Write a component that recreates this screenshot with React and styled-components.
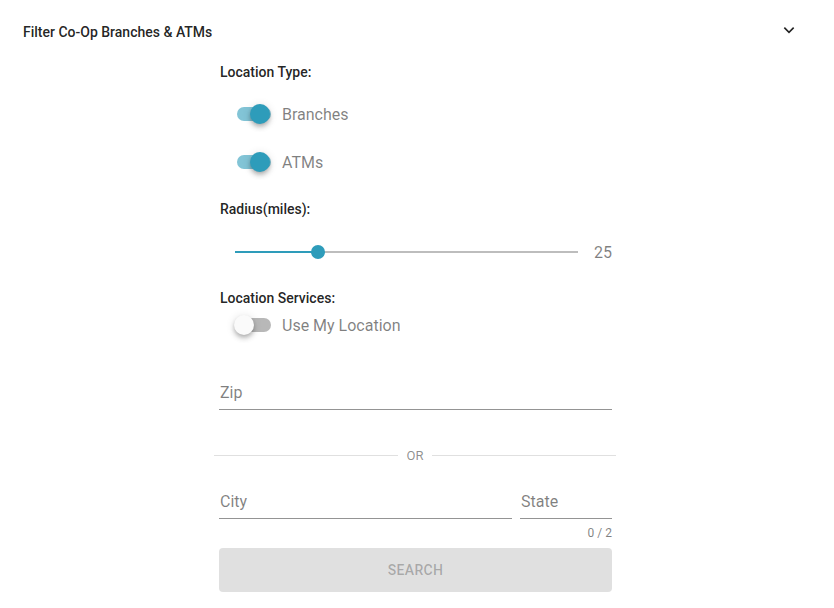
import React from "react";
import styled, { createGlobalStyle } from "styled-components";

const TEAL = "#2e9cba";

const Global = createGlobalStyle`
  html, body { margin: 0; padding: 0; background: #fff; }
  body { font-family: Roboto, "Noto Sans", Arial, sans-serif; color: rgba(0,0,0,0.87); }
  * { box-sizing: border-box; }
`;

const Page = styled.div`
  width: 834px;
  height: 608px;
  overflow: hidden;
  background: #fff;
`;

const Header = styled.div`
  height: 64px;
  display: flex;
  align-items: center;
  justify-content: space-between;
  padding: 0 37px 0 23px;
`;

const Title = styled.div`
  font-size: 14px;
  font-weight: 500;
  color: rgba(0,0,0,0.87);
`;

const Chevron = styled.svg`
  width: 16px;
  height: 16px;
  margin-top: -4px;
`;

const Body = styled.div`
  width: 393px;
  margin-left: 219px;
  display: flex;
  flex-direction: column;
`;

const Label = styled.div`
  font-size: 14px;
  font-weight: 500;
  line-height: 20px;
  height: 20px;
  margin-top: ${(p) => p.$mt || 0}px;
  padding-left: 1px;
  color: rgba(0,0,0,0.87);
`;

const SwitchRow = styled.div`
  display: flex;
  align-items: center;
  height: ${(p) => p.$h || 48}px;
  padding-left: 18px;
  margin-top: ${(p) => p.$mt || 0}px;
`;

const Track = styled.div`
  position: relative;
  width: 34px;
  height: 14px;
  border-radius: 7px;
  background: ${(p) => (p.$on ? "rgba(46,156,186,0.6)" : "rgba(0,0,0,0.28)")};
  margin-right: 11px;
`;

const Thumb = styled.div`
  position: absolute;
  top: -3px;
  left: ${(p) => (p.$on ? "13px" : "-3px")};
  width: 20px;
  height: 20px;
  border-radius: 50%;
  background: ${(p) => (p.$on ? TEAL : "#fafafa")};
  box-shadow: 0 2px 4px -1px rgba(0,0,0,0.2), 0 4px 5px 0 rgba(0,0,0,0.14), 0 1px 10px 0 rgba(0,0,0,0.12);
`;

const SwitchText = styled.span`
  font-size: 16px;
  color: rgba(0,0,0,0.5);
`;

const SliderRow = styled.div`
  display: flex;
  align-items: center;
  height: 32px;
  margin-top: 17px;
`;

const SliderTrack = styled.div`
  position: relative;
  margin-left: 16px;
  width: 343px;
  height: 2px;
  background: #bdbdbd;
`;

const SliderFill = styled.div`
  position: absolute;
  left: 0;
  top: 0;
  height: 2px;
  background: ${TEAL};
`;

const SliderThumb = styled.div`
  position: absolute;
  top: -6px;
  width: 14px;
  height: 14px;
  margin-left: -7px;
  border-radius: 50%;
  background: ${TEAL};
`;

const SliderValue = styled.div`
  margin-left: auto;
  font-size: 16px;
  color: rgba(0,0,0,0.5);
`;

const Field = styled.div`
  flex: ${(p) => p.$flex || "1"};
  display: flex;
  flex-direction: column;
`;

const FieldBox = styled.div`
  height: 34px;
  display: flex;
  align-items: flex-end;
  border-bottom: 1px solid rgba(0,0,0,0.42);
  padding-bottom: 7px;
  font-size: 16px;
  color: rgba(0,0,0,0.5);
  padding-left: 1px;
`;

const Counter = styled.div`
  text-align: right;
  font-size: 12px;
  color: rgba(0,0,0,0.5);
  margin-top: 7px;
  height: 14px;
`;

const FieldRow = styled.div`
  display: flex;
  gap: 8px;
  margin-top: ${(p) => p.$mt || 0}px;
`;

const Divider = styled.div`
  display: flex;
  align-items: center;
  margin: 36px -4px 0 -5px;
  height: 18px;
  font-size: 13px;
  color: rgba(0,0,0,0.45);
  &::before, &::after {
    content: "";
    flex: 1;
    height: 1px;
    background: rgba(0,0,0,0.12);
  }
  span { padding: 0 9px; }
`;

const SearchButton = styled.button`
  margin-top: 8px;
  height: 44px;
  border: none;
  border-radius: 4px;
  background: #e0e0e0;
  color: rgba(0,0,0,0.26);
  font-family: inherit;
  font-size: 14px;
  font-weight: 500;
  letter-spacing: 0.3px;
  text-transform: uppercase;
`;

function Switch({ on, label, mt, h }) {
  return (
    <SwitchRow $mt={mt} $h={h}>
      <Track $on={on}>
        <Thumb $on={on} />
      </Track>
      <SwitchText>{label}</SwitchText>
    </SwitchRow>
  );
}

export default function App() {
  const pct = ((25 - 1) / 99) * 100;
  return (
    <Page>
      <Global />
      <Header>
        <Title>Filter Co-Op Branches &amp; ATMs</Title>
        <Chevron viewBox="0 0 24 24">
          <path d="M5 8.5l7 7 7-7" fill="none" stroke="#222" strokeWidth="2.4" />
        </Chevron>
      </Header>
      <Body>
        <Label $mt={-2}>Location Type:</Label>
        <Switch on label="Branches" mt={8} />
        <Switch on label="ATMs" />
        <Label $mt={13}>Radius(miles):</Label>
        <SliderRow>
          <SliderTrack>
            <SliderFill style={{ width: `${pct}%` }} />
            <SliderThumb style={{ left: `${pct}%` }} />
          </SliderTrack>
          <SliderValue>25</SliderValue>
        </SliderRow>
        <Label $mt={20}>Location Services:</Label>
        <Switch label="Use My Location" h={34} />
        <FieldRow $mt={34}>
          <Field>
            <FieldBox>Zip</FieldBox>
          </Field>
        </FieldRow>
        <Divider>
          <span>OR</span>
        </Divider>
        <FieldRow $mt={21}>
          <Field>
            <FieldBox>City</FieldBox>
            <Counter />
          </Field>
          <Field $flex="0 0 92px">
            <FieldBox>State</FieldBox>
            <Counter>0 / 2</Counter>
          </Field>
        </FieldRow>
        <SearchButton>Search</SearchButton>
      </Body>
    </Page>
  );
}
